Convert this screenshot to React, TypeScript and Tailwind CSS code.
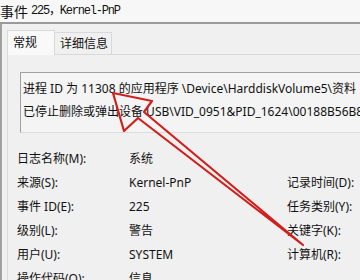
const rows = [
  { label: '日志名称(M):', value: '系统', right: '' },
  { label: '来源(S):', value: 'Kernel-PnP', right: '记录时间(D):' },
  { label: '事件 ID(E):', value: '225', right: '任务类别(Y):' },
  { label: '级别(L):', value: '警告', right: '关键字(K):' },
  { label: '用户(U):', value: 'SYSTEM', right: '计算机(R):' },
  { label: '操作代码(O):', value: '信息', right: '' },
];

function RedArrow() {
  // hand-drawn hollow arrow, tip near the process id
  return (
    <svg
      className="absolute left-0 top-0 pointer-events-none"
      width="360"
      height="280"
      viewBox="0 0 360 280"
    >
      <polygon
        points="113,93 124,131 138,118 303,245 144,112 152,101"
        fill="none"
        stroke="#d0201c"
        strokeWidth="2.2"
        strokeLinejoin="round"
      />
    </svg>
  );
}

export default function App() {
  return (
    <div className="relative w-[360px] h-[280px] overflow-hidden bg-[#f0f0f0] text-[#111] font-['Noto_Sans','Noto_Sans_CJK_SC',sans-serif]">
      <div className="h-[22px] flex items-center bg-[#f7f7f7] whitespace-nowrap">
        <span className="text-[14px] font-['Noto_Sans_CJK_SC',sans-serif]">事件</span>
        <span className="ml-[3px] text-[12px] tracking-[-1.2px] font-['Liberation_Mono','Noto_Sans_CJK_SC',monospace]">
          225，Kernel-PnP
        </span>
      </div>
      <div className="h-[2px] bg-[#9a9a9a]" />
      <div className="border-l-2 border-[#a0a0a0] h-full">
        <div className="flex items-end pl-[5px] pt-[6px]">
          <div className="relative z-10 -mb-px h-[25px] w-[48px] border border-b-0 border-[#d9d9d9] bg-[#f9f9f9] pl-[5px] pt-[3px] text-[12px]">
            常规
          </div>
          <div className="h-[22px] w-[57px] border-t border-r border-[#d9d9d9] pl-[5px] pt-[2px] text-[12px]">
            详细信息
          </div>
        </div>
        <div className="ml-[5px] border-t border-l border-[#d9d9d9] h-full">
          <div className="ml-[12px] mt-[17px] h-[61px] border border-r-0 border-[#a0a0a0] border-b-[#dcdcdc] bg-[#f4f4f4] pl-[2px] pt-[4px] text-[12px] leading-[23px] whitespace-nowrap">
            <div>进程 ID 为 11308 的应用程序 \Device\HarddiskVolume5\资料</div>
            <div>已停止删除或弹出设备 USB\VID_0951&amp;PID_1624\00188B56B88C</div>
          </div>
          <div className="mt-[14px] pl-[9px] text-[12px] whitespace-nowrap">
            {rows.map((r) => (
              <div key={r.label} className="flex items-center h-[24px]">
                <div className="w-[112px]">{r.label}</div>
                <div className="w-[158px]">{r.value}</div>
                <div>{r.right}</div>
              </div>
            ))}
          </div>
        </div>
      </div>
      <RedArrow />
    </div>
  );
}
